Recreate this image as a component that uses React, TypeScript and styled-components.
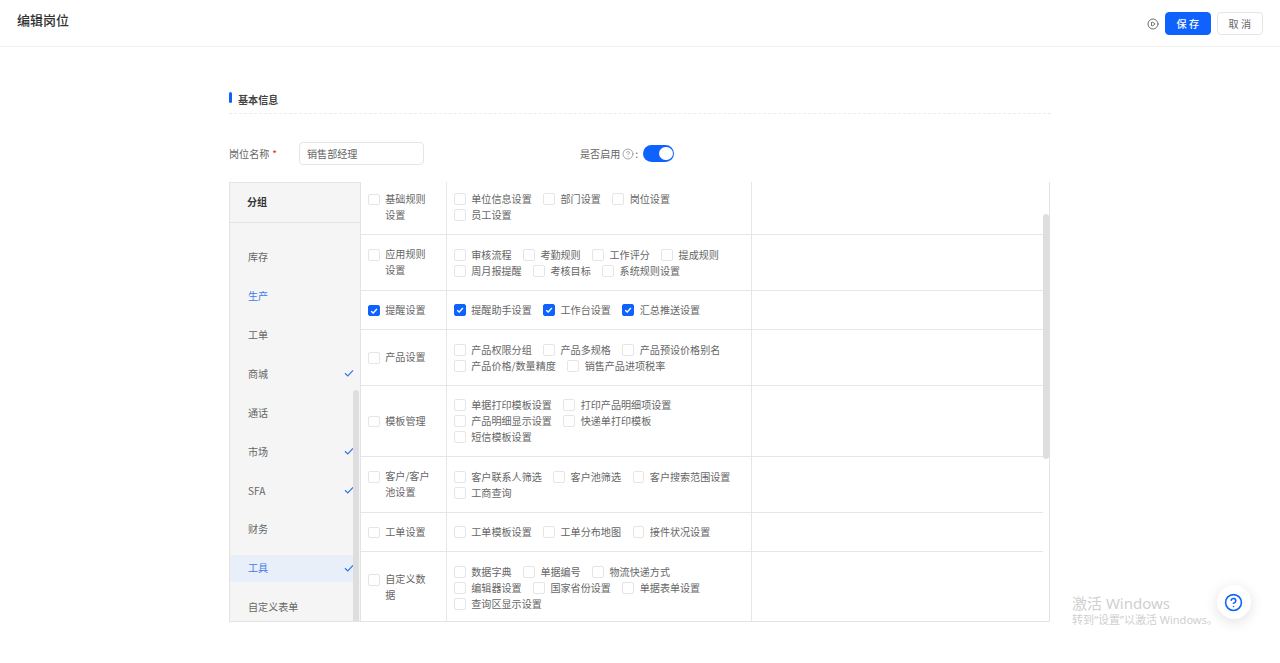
import React from "react";
import styled, { createGlobalStyle } from "styled-components";
import { CirclePlay, CircleHelp } from "lucide-react";

const Global = createGlobalStyle`
  html, body { margin: 0; padding: 0; height: 663px; overflow: hidden; background: #fff; }
  body { font-family: "Noto Sans CJK SC", "Noto Sans", sans-serif; color: #666; }
  * { box-sizing: border-box; }
`;

const Page = styled.div`
  position: relative;
  width: 1280px;
  height: 663px;
  overflow: hidden;
`;

const Header = styled.header`
  height: 47px;
  border-bottom: 1px solid #f2f2f2;
  display: flex;
  align-items: flex-start;
  justify-content: space-between;
  padding: 11px 17px 0;
`;

const Title = styled.h1`
  margin: 0;
  font-size: 13px;
  line-height: 17px;
  font-weight: 500;
  color: #333;
`;

const Actions = styled.div`
  display: flex;
  align-items: center;
  margin-top: 1px;
  color: #555;
`;

const TourIcon = styled(CirclePlay)`
  width: 12px;
  height: 12px;
  margin-right: 6px;
`;

const Button = styled.button<{ $primary?: boolean }>`
  width: 46px;
  height: 23px;
  margin-right: ${(p) => (p.$primary ? "6px" : "0")};
  padding: 0 0 0 2px;
  border-radius: 4px;
  border: 1px solid ${(p) => (p.$primary ? "#0f62fe" : "#e5e5e5")};
  background: ${(p) => (p.$primary ? "#0f62fe" : "#fff")};
  color: ${(p) => (p.$primary ? "#fff" : "#666")};
  font: ${(p) => (p.$primary ? 500 : 400)} 10.08px/21px "Noto Sans CJK SC", sans-serif;
  letter-spacing: 2.4px;
`;

const Content = styled.main`
  width: 822px;
  margin-left: 229px;
`;

const SectionHead = styled.div`
  position: relative;
  height: 67px;
  padding: 45px 0 0 9px;
  border-bottom: 1px dashed #ececec;
  font-size: 10.08px;
  line-height: 16px;
  font-weight: 700;
  color: #444;
`;

const SectionBar = styled.span`
  position: absolute;
  left: 0;
  top: 45px;
  width: 3px;
  height: 11px;
  border-radius: 1.5px;
  background: #0f62fe;
`;

const FormRow = styled.div`
  display: flex;
  align-items: center;
  height: 23px;
  margin-top: 28px;
  font-size: 10.08px;
`;

const NameGroup = styled.div`
  display: flex;
  align-items: center;
  width: 351px;
`;

const NameLabel = styled.label`
  width: 70px;
  padding-bottom: 1px;
`;

const Star = styled.span`
  color: #f5222d;
  margin-left: 3px;
`;

const NameInput = styled.input`
  width: 125px;
  height: 23px;
  padding: 0 7px 1px;
  border: 1px solid #e5e5e5;
  border-radius: 4px;
  color: #666;
  font: 10.08px "Noto Sans CJK SC", sans-serif;
`;

const EnableGroup = styled.div`
  display: flex;
  align-items: center;
`;

const HelpSmall = styled(CircleHelp)`
  width: 12px;
  height: 12px;
  margin: 0 1px 0 2px;
  color: #888;
`;

const Switch = styled.span`
  display: flex;
  justify-content: flex-end;
  align-items: center;
  width: 31px;
  height: 17px;
  margin-left: 5px;
  padding-right: 1.5px;
  border-radius: 8.5px;
  background: #0f62fe;
`;

const Knob = styled.span`
  width: 13.5px;
  height: 13.5px;
  border-radius: 50%;
  background: #fff;
`;

const Board = styled.div`
  display: flex;
  height: 440px;
  margin-top: 17px;
  width: 821px;
  border-bottom: 1px solid #e3e3e3;
`;

const Sidebar = styled.aside`
  position: relative;
  width: 132px;
  flex: none;
  overflow: hidden;
  background: #f5f5f5;
  border: 1px solid #e3e3e3;
  border-bottom: 0;
`;

const SideHead = styled.div`
  height: 39.5px;
  padding-left: 17px;
  border-bottom: 1px solid #e3e3e3;
  font-size: 10.08px;
  line-height: 37px;
  font-weight: 700;
  color: #333;
`;

const SideList = styled.ul`
  list-style: none;
  margin: 0;
  padding: 21.5px 0 0;
`;

const SideItem = styled.li<{ $active?: boolean; $current?: boolean }>`
  display: flex;
  align-items: center;
  justify-content: space-between;
  height: 27px;
  width: 123px;
  margin-bottom: 11.9px;
  padding: 0 0 1.5px 18px;
  font-size: 10.08px;
  color: ${(p) => (p.$active || p.$current ? "#3b78f0" : "#666")};
  background: ${(p) => (p.$active ? "#e9eff8" : "transparent")};
`;

const SideThumb = styled.span`
  position: absolute;
  right: 1px;
  top: 207px;
  width: 6px;
  height: 233px;
  border-radius: 3px;
  background: #dedede;
`;

const Tick = styled.svg`
  width: 10px;
  height: 10px;
  margin-right: -1px;
  flex: none;
`;

const Perms = styled.section`
  position: relative;
  flex: 1;
  overflow: hidden;
  border-right: 1px solid #e3e3e3;
  padding-right: 6px;
`;

const Scroller = styled.div`
  margin-top: -2.5px;
`;

const PermRow = styled.div`
  display: grid;
  grid-template-columns: 85px 306px 1fr;
  border-bottom: 1px solid #e6e6e6;
`;

const GroupCell = styled.div`
  display: flex;
  align-items: center;
  padding-left: 7px;
`;

const GroupInner = styled.div`
  display: flex;
  align-items: flex-start;
  gap: 5.76px;
  font-size: 10.08px;
  line-height: 16px;
`;

const GroupText = styled.span`
  width: 46px;
  word-break: break-all;
`;

const ItemsCell = styled.div`
  display: flex;
  flex-wrap: wrap;
  align-content: center;
  padding: 11.25px 5px 11.25px 7px;
  border-left: 1px solid #e6e6e6;
  border-right: 1px solid #e6e6e6;
`;

const Item = styled.span`
  display: flex;
  align-items: center;
  gap: 5.76px;
  height: 16px;
  margin-right: 11.52px;
  font-size: 10.08px;
  white-space: nowrap;
`;

const Box = styled.span<{ $on?: boolean }>`
  display: flex;
  align-items: center;
  justify-content: center;
  flex: none;
  width: 11.52px;
  height: 11.52px;
  margin-top: 1px;
  border-radius: 2px;
  border: 1px solid ${(p) => (p.$on ? "#0f62fe" : "#e5e5e5")};
  background: ${(p) => (p.$on ? "#0f62fe" : "#fff")};
`;

const GroupBox = styled(Box)`
  margin-top: 3px;
`;

const BoxTick = styled.svg`
  width: 8px;
  height: 8px;
`;

const PermThumb = styled.span`
  position: absolute;
  right: 0;
  top: 32px;
  width: 6px;
  height: 245px;
  border-radius: 3px;
  background: #dedede;
`;

const Watermark = styled.div`
  position: absolute;
  left: 1072px;
  top: 594px;
  color: #cfcfcf;
  font-family: "Noto Sans", "Noto Sans CJK SC", sans-serif;
  pointer-events: none;
`;

const WatermarkTitle = styled.div`
  font-size: 15px;
  line-height: 18px;
`;

const WatermarkSub = styled.div`
  font-size: 11px;
  line-height: 16px;
  white-space: nowrap;
`;

const Fab = styled.button`
  position: absolute;
  left: 1217px;
  top: 585px;
  width: 34px;
  height: 34px;
  padding: 0 1px 0 0;
  border: 0;
  border-radius: 50%;
  background: #fff;
  box-shadow: 0 3px 14px rgba(0, 0, 0, 0.12);
  display: flex;
  align-items: center;
  justify-content: center;
  color: #0f62fe;
`;

const side: { name: string; tick?: boolean; active?: boolean; current?: boolean }[] = [
  { name: "库存" },
  { name: "生产", current: true },
  { name: "工单" },
  { name: "商城", tick: true },
  { name: "通话" },
  { name: "市场", tick: true },
  { name: "SFA", tick: true },
  { name: "财务" },
  { name: "工具", tick: true, active: true },
  { name: "自定义表单" },
];

const rows: { group: string; on?: boolean; items: string[] }[] = [
  { group: "基础规则设置", items: ["单位信息设置", "部门设置", "岗位设置", "员工设置"] },
  { group: "应用规则设置", items: ["审核流程", "考勤规则", "工作评分", "提成规则", "周月报提醒", "考核目标", "系统规则设置"] },
  { group: "提醒设置", on: true, items: ["提醒助手设置", "工作台设置", "汇总推送设置"] },
  { group: "产品设置", items: ["产品权限分组", "产品多规格", "产品预设价格别名", "产品价格/数量精度", "销售产品进项税率"] },
  { group: "模板管理", items: ["单据打印模板设置", "打印产品明细项设置", "产品明细显示设置", "快递单打印模板", "短信模板设置"] },
  { group: "客户/客户池设置", items: ["客户联系人筛选", "客户池筛选", "客户搜索范围设置", "工商查询"] },
  { group: "工单设置", items: ["工单模板设置", "工单分布地图", "接件状况设置"] },
  { group: "自定义数据", items: ["数据字典", "单据编号", "物流快递方式", "编辑器设置", "国家省份设置", "单据表单设置", "查询区显示设置"] },
];

const CheckMark = () => (
  <BoxTick viewBox="0 0 8 8" fill="none" stroke="#fff" strokeWidth="1.4">
    <path d="M1.2 4.2 3.2 6 6.9 2" />
  </BoxTick>
);

export default function App() {
  return (
    <Page>
      <Global />
      <Header>
        <Title>编辑岗位</Title>
        <Actions>
          <TourIcon strokeWidth={1.7} />
          <Button $primary>保存</Button>
          <Button>取消</Button>
        </Actions>
      </Header>
      <Content>
        <SectionHead>
          <SectionBar />
          基本信息
        </SectionHead>
        <FormRow>
          <NameGroup>
            <NameLabel>
              岗位名称<Star>*</Star>
            </NameLabel>
            <NameInput defaultValue="销售部经理" />
          </NameGroup>
          <EnableGroup>
            是否启用
            <HelpSmall strokeWidth={1.5} />:
            <Switch>
              <Knob />
            </Switch>
          </EnableGroup>
        </FormRow>
        <Board>
          <Sidebar>
            <SideHead>分组</SideHead>
            <SideList>
              {side.map((s) => (
                <SideItem key={s.name} $active={s.active} $current={s.current}>
                  {s.name}
                  {s.tick && (
                    <Tick viewBox="0 0 10 10" fill="none" stroke="#2f74f0" strokeWidth="1.2">
                      <path d="M1 5.3 3.8 8 9 2.4" />
                    </Tick>
                  )}
                </SideItem>
              ))}
            </SideList>
            <SideThumb />
          </Sidebar>
          <Perms>
            <Scroller>
              {rows.map((r) => (
                <PermRow key={r.group}>
                  <GroupCell>
                    <GroupInner>
                      <GroupBox $on={r.on}>{r.on && <CheckMark />}</GroupBox>
                      <GroupText>{r.group}</GroupText>
                    </GroupInner>
                  </GroupCell>
                  <ItemsCell>
                    {r.items.map((i) => (
                      <Item key={i}>
                        <Box $on={r.on}>{r.on && <CheckMark />}</Box>
                        {i}
                      </Item>
                    ))}
                  </ItemsCell>
                  <div />
                </PermRow>
              ))}
            </Scroller>
            <PermThumb />
          </Perms>
        </Board>
      </Content>
      <Watermark>
        <WatermarkTitle>激活 Windows</WatermarkTitle>
        <WatermarkSub>转到“设置”以激活 Windows。</WatermarkSub>
      </Watermark>
      <Fab>
        <CircleHelp size={19} strokeWidth={2} />
      </Fab>
    </Page>
  );
}
